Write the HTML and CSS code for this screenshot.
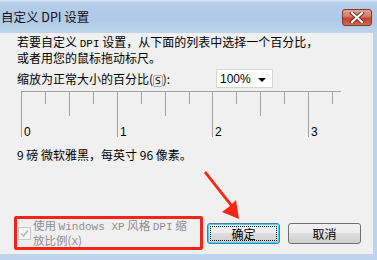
FILE: index.html
```html
<!DOCTYPE html>
<html>
<head>
  <title>自定义 DPI 设置</title>
  <link rel="stylesheet" href="styles.css">
</head>
<body>
  <div class="window">
    <div class="titlebar">
      <span class="title">自定义 DPI 设置</span>
      <div class="close-btn">
        <svg width="16" height="11" viewBox="0 0 16 11">
          <path d="M3 1 L13 10 M13 1 L3 10" stroke="#6b2a1e" stroke-width="4" stroke-linecap="square"/>
          <path d="M3 1 L13 10 M13 1 L3 10" stroke="#fff" stroke-width="2.2" stroke-linecap="square"/>
        </svg>
      </div>
    </div>
    <div class="content">
      <p class="intro">若要自定义 <span class="mono">DPI</span> 设置，从下面的列表中选择一个百分比，<br>或者用您的鼠标拖动标尺。</p>
      <div class="scale-row">
        <label class="scale-label">缩放为正常大小的百分比(<u>S</u>):</label>
        <div class="select">
          <span>100%</span>
          <span class="caret"></span>
        </div>
      </div>
      <div class="ruler">
        <svg width="330" height="50" viewBox="0 0 330 50">
          <g stroke="#a0a0a0" stroke-width="1" shape-rendering="crispEdges">
            <line x1="0" y1="0.5" x2="320" y2="0.5"/>
            <line x1="0.5" y1="0" x2="0.5" y2="46"/>
            <line x1="24.5" y1="0" x2="24.5" y2="13"/>
            <line x1="48.5" y1="0" x2="48.5" y2="25"/>
            <line x1="72.5" y1="0" x2="72.5" y2="13"/>
            <line x1="96.5" y1="0" x2="96.5" y2="46"/>
            <line x1="120.5" y1="0" x2="120.5" y2="13"/>
            <line x1="144.5" y1="0" x2="144.5" y2="25"/>
            <line x1="168.5" y1="0" x2="168.5" y2="13"/>
            <line x1="191.5" y1="0" x2="191.5" y2="46"/>
            <line x1="215.5" y1="0" x2="215.5" y2="13"/>
            <line x1="239.5" y1="0" x2="239.5" y2="25"/>
            <line x1="263.5" y1="0" x2="263.5" y2="13"/>
            <line x1="287.5" y1="0" x2="287.5" y2="46"/>
            <line x1="311.5" y1="0" x2="311.5" y2="13"/>
          </g>
          <g class="ruler-num">
            <text x="3" y="45">0</text>
            <text x="99" y="45">1</text>
            <text x="194" y="45">2</text>
            <text x="290" y="45">3</text>
          </g>
        </svg>
      </div>
      <p class="font-info">9 磅 微软雅黑，每英寸 96 像素。</p>
      <div class="footer">
        <div class="xp-option">
          <span class="checkbox">
            <svg width="11" height="11" viewBox="0 0 11 11">
              <path d="M2 5.5 L4.5 8 L9 2.5" stroke="#b8b8b8" stroke-width="1.6" fill="none"/>
            </svg>
          </span>
          <span class="xp-label">使用 <span class="mono">Windows XP</span> 风格 <span class="mono">DPI</span> 缩<br>放比例(<span class="mono">X</span>)</span>
        </div>
        <button class="btn btn-default"><span class="focus">确定</span></button>
        <button class="btn">取消</button>
      </div>
    </div>
    <svg class="arrow" width="60" height="60" viewBox="0 0 60 60">
      <path d="M2 2 L28 35 L20 41 L37 48 L34 29 L30 33 L4 0 Z" fill="#fb2513"/>
    </svg>
  </div>
</body>
</html>
```

FILE: styles.css
```css
body {
  margin: 0;
  font-family: "Noto Sans CJK SC", "DejaVu Sans", sans-serif;
  font-size: 12px;
  color: #000;
}

.window {
  position: relative;
  width: 377px;
  height: 260px;
  background-color: #bed4ec;
  display: flex;
  flex-direction: column;
  overflow: hidden;
}

.titlebar {
  height: 33px;
  display: flex;
  align-items: flex-start;
  justify-content: space-between;
  background: linear-gradient(to bottom, #dbe7f5 0, #b5cde9 3px, #b0c9e7 20px, #bed4ec 33px);
}

.title {
  margin: 9px 0 0 1px;
  font-size: 12.5px;
  line-height: 16px;
  color: #111;
}

.close-btn {
  width: 30px;
  height: 17px;
  margin: 9px 5px 0 0;
  border: 1px solid #7c3a30;
  border-radius: 3px;
  background: linear-gradient(to bottom, #e8a394 0, #d47765 45%, #c0452e 55%, #d7684e 100%);
  display: flex;
  align-items: center;
  justify-content: center;
  box-sizing: border-box;
}

.content {
  flex: 1;
  margin: 0 4px 6px 0;
  background-color: #f0f0f0;
  padding: 2px 0 0 17px;
  display: flex;
  flex-direction: column;
}

.intro {
  margin: 0;
  font-size: 12px;
  line-height: 14px;
}

.scale-row {
  display: flex;
  align-items: center;
  margin-top: 4px;
}

.scale-label {
  width: 199px;
}

.scale-label u {
  text-decoration: none;
  border: 1px solid #aaa;
  border-radius: 2px;
  font-family: "DejaVu Sans", sans-serif;
  font-size: 9px;
  padding: 0 1px;
}

.select {
  width: 57px;
  height: 19px;
  box-sizing: border-box;
  background-color: #fff;
  border: 1px solid #d5d5d5;
  display: flex;
  align-items: center;
  justify-content: space-between;
  padding: 0 6px 0 3px;
  font-family: "Liberation Sans", sans-serif;
  font-size: 12px;
}

.caret {
  width: 0;
  height: 0;
  border-left: 4px solid transparent;
  border-right: 4px solid transparent;
  border-top: 4px solid #000;
  margin-top: 2px;
}

.ruler {
  margin: 3px 0 0 4px;
  height: 50px;
}

.ruler svg {
  display: block;
}

.ruler-num text {
  font-family: "Liberation Sans", sans-serif;
  font-size: 12px;
  fill: #000;
}

.font-info {
  margin: 7px 0 0 0;
  font-size: 12px;
  line-height: 14px;
}

.footer {
  display: flex;
  align-items: center;
  margin-top: auto;
  margin-left: -3px;
  margin-bottom: 4px;
}

.xp-option {
  width: 182px;
  height: 28px;
  border: 3px solid #f4231a;
  border-radius: 2px;
  display: flex;
  align-items: center;
  padding-left: 1px;
  color: #8e8e8e;
}

.checkbox {
  width: 13px;
  height: 13px;
  box-sizing: border-box;
  border: 1px solid #c8c8c8;
  background-color: #f4f4f4;
  display: flex;
  align-items: center;
  justify-content: center;
  margin-right: 2px;
}

.xp-label {
  font-size: 11.5px;
  line-height: 13px;
  margin-top: 1px;
}

.mono {
  font-family: "Liberation Mono", monospace;
  font-size: 11px;
}

.btn {
  width: 73px;
  height: 21px;
  margin-left: 8px;
  box-sizing: border-box;
  border: 1px solid #707070;
  border-radius: 3px;
  background: linear-gradient(to bottom, #f2f2f2 0, #ebebeb 50%, #dddddd 50%, #cfcfcf 100%);
  font-family: "Noto Sans CJK SC", sans-serif;
  font-size: 12px;
  padding: 0;
  color: #000;
}

.btn-default {
  margin-left: 4px;
  border-color: #3c7fb1;
  box-shadow: inset 0 0 0 1px #48d2fb;
  padding: 2px;
}

.focus {
  display: block;
  height: 100%;
  border: 1px dotted #000;
  box-sizing: border-box;
  line-height: 13px;
}

.arrow {
  position: absolute;
  left: 202px;
  top: 171px;
}
```
